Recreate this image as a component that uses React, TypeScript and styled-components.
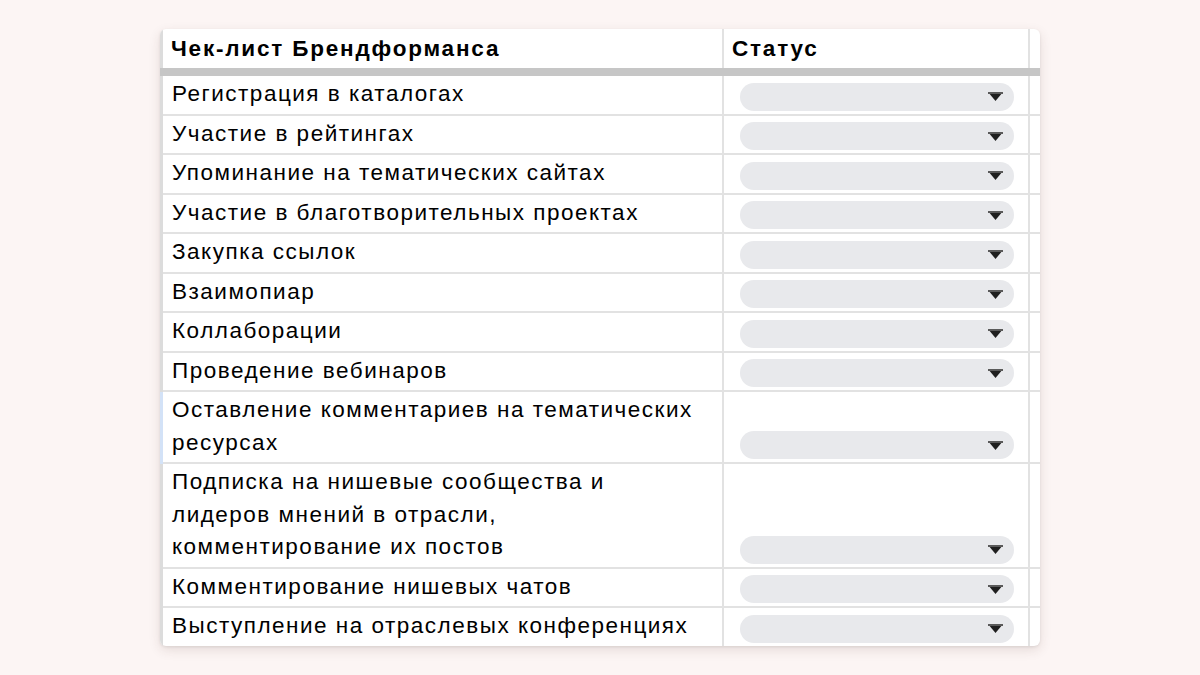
import React from "react";
import styled, { createGlobalStyle } from "styled-components";

const GlobalStyle = createGlobalStyle`
  html, body {
    margin: 0;
    padding: 0;
    background: #fcf5f4;
  }
  body {
    font-family: "Liberation Sans", Arial, sans-serif;
  }
`;

const Page = styled.div`
  width: 1200px;
  height: 675px;
  box-sizing: border-box;
  padding: 29px 0 0 160px;
  background: #fcf5f4;
`;

const Card = styled.div`
  width: 880px;
  background: #ffffff;
  border-radius: 6px;
  overflow: hidden;
  box-shadow: 0 4px 12px rgba(80, 50, 40, 0.13), 0 1px 3px rgba(0, 0, 0, 0.08);
`;

const Row = styled.div<{ $selected?: boolean }>`
  display: grid;
  grid-template-columns: 561px 306px 1fr;
  border-left: 3px solid ${(p) => (p.$selected ? "#d3e2f7" : "#dcdcdc")};
`;

const HeaderRow = styled(Row)`
  height: 39px;
`;

const FreezeBar = styled.div`
  height: 8px;
  background: #c6c6c6;
`;

const Cell = styled.div<{ $header?: boolean; $last?: boolean }>`
  box-sizing: border-box;
  border-right: 2px solid #e2e2e2;
  border-bottom: ${(p) => (p.$header || p.$last ? "0" : "2px solid #e2e2e2")};
`;

const TextCell = styled(Cell)`
  padding: 2px 10px 3px 9px;
  font-size: 22.5px;
  line-height: 32.5px;
  letter-spacing: 1.5px;
  color: #000;
  font-weight: 400;
`;

const HeaderText = styled(Cell)`
  display: flex;
  align-items: center;
  padding: 0 8px;
  font-size: 22.5px;
  font-weight: 700;
  letter-spacing: 1.8px;
  color: #000;
`;

const StatusCell = styled(Cell)`
  display: flex;
  align-items: flex-end;
  padding: 0 14px 3px 16px;
`;

const Spare = styled(Cell)`
  border-right: 0;
`;

const Pill = styled.div`
  flex: 1;
  height: 28px;
  border-radius: 14px;
  background: #e8e9ec;
  display: flex;
  align-items: center;
  justify-content: flex-end;
  padding-right: 11px;
`;

const Arrow = () => (
  <svg width="15" height="9" viewBox="0 0 15 9">
    <polygon points="0,0 15,0 7.5,9" fill="#1f1f1f" />
    <rect x="0" y="0" width="15" height="2" fill="#5a5a5a" />
  </svg>
);

const items: React.ReactNode[] = [
  "Регистрация в каталогах",
  "Участие в рейтингах",
  "Упоминание на тематических сайтах",
  "Участие в благотворительных проектах",
  "Закупка ссылок",
  "Взаимопиар",
  "Коллаборации",
  "Проведение вебинаров",
  <>
    Оставление комментариев на тематических
    <br />
    ресурсах
  </>,
  <>
    Подписка на нишевые сообщества и<br />
    лидеров мнений в отрасли,<br />
    комментирование их постов
  </>,
  "Комментирование нишевых чатов",
  "Выступление на отраслевых конференциях",
];

export default function App() {
  return (
    <Page>
      <GlobalStyle />
      <Card>
        <HeaderRow>
          <HeaderText $header>Чек-лист Брендформанса</HeaderText>
          <HeaderText $header>Статус</HeaderText>
          <Spare $header />
        </HeaderRow>
        <FreezeBar />
        {items.map((t, i) => {
          const last = i === items.length - 1;
          return (
            <Row key={i} $selected={i === 8}>
              <TextCell $last={last}>{t}</TextCell>
              <StatusCell $last={last}>
                <Pill>
                  <Arrow />
                </Pill>
              </StatusCell>
              <Spare $last={last} />
            </Row>
          );
        })}
      </Card>
    </Page>
  );
}
